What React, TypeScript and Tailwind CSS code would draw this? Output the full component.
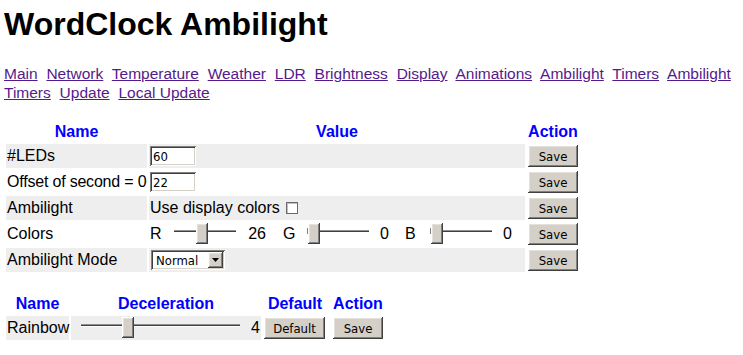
import React from "react";

const bevelOut =
  "shadow-[inset_-1px_-1px_#404040,inset_1px_1px_#ffffff,inset_-2px_-2px_#808080,inset_2px_2px_#e4e1dc]";
const bevelIn =
  "shadow-[inset_1px_1px_#808080,inset_-1px_-1px_#ffffff,inset_2px_2px_#404040,inset_-2px_-2px_#d4d0c8]";
const ctlFont = "font-['DejaVu_Sans_Condensed','DejaVu_Sans',sans-serif]";

function Btn({ label, w = "w-[50px]" }: { label: string; w?: string }) {
  return (
    <button
      className={`${w} h-[22px] bg-[#d4d0c8] ${bevelOut} flex items-center justify-center text-[13px] leading-none text-black ${ctlFont}`}
    >
      {label}
    </button>
  );
}

function Slider({ frac, tick, w }: { frac: number; tick?: boolean; w: number }) {
  const trackW = w - 4;
  const left = 2 + frac * (trackW - 12);
  return (
    <div className="relative h-[22px] shrink-0" style={{ width: w }}>
      <div className="absolute left-[2px] right-[2px] top-[7px] h-[3px] border-t border-[#909090] bg-[#404040] border-b-white border-b" />
      {tick && <div className="absolute left-[2px] top-[5px] h-[6px] w-[1px] bg-[#808080]" />}
      <div
        className={`absolute top-[0px] h-[21px] w-[12px] bg-[#d4d0c8] ${bevelOut}`}
        style={{ left }}
      />
    </div>
  );
}

const links = [
  "Main",
  "Network",
  "Temperature",
  "Weather",
  "LDR",
  "Brightness",
  "Display",
  "Animations",
  "Ambilight",
  "Timers",
  "Ambilight Timers",
  "Update",
  "Local Update",
];

const th = "p-[1px] text-[#0000ff] font-bold text-center leading-[18.4px]";
const td = "p-[1px] h-[24px] leading-[18.4px] align-middle";
const gray = "bg-[#eeeeee]";

function TextBox({ value }: { value: string }) {
  return (
    <div
      className={`w-[46px] h-[20px] bg-white ${bevelIn} pl-[3px] flex items-center text-[13px] leading-none ${ctlFont}`}
    >
      {value}
    </div>
  );
}

export default function App() {
  return (
    <div className="min-h-[355px] bg-white pl-[4px] pt-[6px] text-[16px] leading-[18.4px] text-black font-['Liberation_Sans',Arial,sans-serif]">
      <h1 className="text-[32px] font-bold leading-[37px] mb-[22px]">WordClock Ambilight</h1>
      <div className="text-[15.5px] leading-[18.8px] mb-[17px]">
        {links.map((l, i) => (
          <React.Fragment key={l}>
            <a href="#" className="text-[#551a8b] underline mr-[4.5px]">
              {l}
            </a>
            {i < links.length - 1 ? " " : ""}
          </React.Fragment>
        ))}
      </div>

      <table className="table-fixed w-[577px] border-separate [border-spacing:2px]">
        <thead>
          <tr>
            <th className={`${th} w-[141px]`}>Name</th>
            <th className={`${th} w-[376px]`}>Value</th>
            <th className={`${th} w-[52px]`}>Action</th>
          </tr>
        </thead>
        <tbody>
          <tr>
            <td className={`${td} ${gray}`}>#LEDs</td>
            <td className={`${td} ${gray}`}>
              <TextBox value="60" />
            </td>
            <td className={td}>
              <Btn label="Save" />
            </td>
          </tr>
          <tr>
            <td className={`${td} whitespace-nowrap tracking-[-0.2px]`}>Offset of second = 0</td>
            <td className={td}>
              <TextBox value="22" />
            </td>
            <td className={td}>
              <Btn label="Save" />
            </td>
          </tr>
          <tr>
            <td className={`${td} ${gray}`}>Ambilight</td>
            <td className={`${td} ${gray}`}>
              <div className="flex items-center">
                <span>Use display colors</span>
                <span className="ml-[6px] w-[12px] h-[12px] bg-white border border-[#6a6a6a] shadow-[inset_1px_1px_#c0c0c0]" />
              </div>
            </td>
            <td className={td}>
              <Btn label="Save" />
            </td>
          </tr>
          <tr>
            <td className={td}>Colors</td>
            <td className={td}>
              <div className="flex items-center">
                <span className="w-[22px] shrink-0">R</span>
                <Slider frac={0.44} w={66} />
                <span className="w-[28px] shrink-0 text-right">26</span>
                <span className="w-[39px] shrink-0 pl-[17px]">G</span>
                <Slider frac={0.02} tick w={66} />
                <span className="w-[18px] shrink-0 text-right">0</span>
                <span className="w-[39px] shrink-0 pl-[16px]">B</span>
                <Slider frac={0.02} tick w={66} />
                <span className="w-[18px] shrink-0 text-right">0</span>
              </div>
            </td>
            <td className={td}>
              <Btn label="Save" />
            </td>
          </tr>
          <tr>
            <td className={`${td} ${gray}`}>Ambilight Mode</td>
            <td className={`${td} ${gray}`}>
              <div
                className={`ml-[1px] w-[74px] h-[20px] bg-white ${bevelIn} flex items-center justify-between pl-[5px] pr-[2px]`}
              >
                <span className={`text-[13px] leading-none ${ctlFont}`}>Normal</span>
                <span className={`w-[15px] h-[16px] bg-[#d4d0c8] ${bevelOut} flex items-center justify-center`}>
                  <svg width="7" height="4" viewBox="0 0 7 4">
                    <path d="M0 0H7L3.5 4Z" fill="#000" />
                  </svg>
                </span>
              </div>
            </td>
            <td className={td}>
              <Btn label="Save" />
            </td>
          </tr>
        </tbody>
      </table>

      <table className="mt-[18px] table-fixed w-[385px] border-separate [border-spacing:2px]">
        <thead>
          <tr>
            <th className={`${th} w-[63px]`}>Name</th>
            <th className={`${th} w-[190px]`}>Deceleration</th>
            <th className={`${th} w-[64px]`}>Default</th>
            <th className={`${th} w-[58px]`}>Action</th>
          </tr>
        </thead>
        <tbody>
          <tr>
            <td className={`${td} ${gray}`}>Rainbow</td>
            <td className={`${td} ${gray}`}>
              <div className="flex items-center">
                <div className="ml-[7px]">
                  <Slider frac={0.28} w={163} />
                </div>
                <span className="flex-1 text-right">4</span>
              </div>
            </td>
            <td className={td}>
              <Btn label="Default" w="w-[61px]" />
            </td>
            <td className={td}>
              <div className="flex justify-center">
                <Btn label="Save" />
              </div>
            </td>
          </tr>
        </tbody>
      </table>
    </div>
  );
}
